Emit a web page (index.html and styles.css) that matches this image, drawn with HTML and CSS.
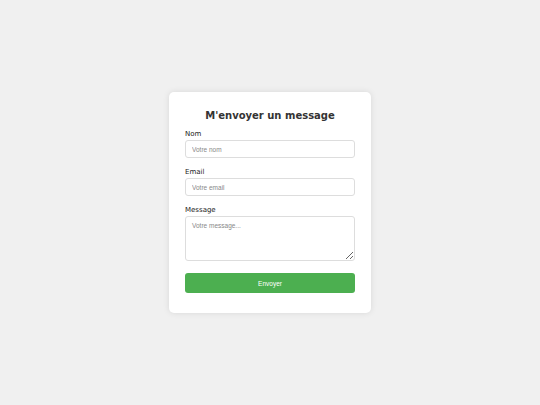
FILE: index.html
```html
<!DOCTYPE html>
<html lang="fr">
<head>
<meta charset="utf-8">
<link rel="stylesheet" href="styles.css">
</head>
<body>
<div class="card">
  <h2 class="title">M'envoyer un message</h2>
  <form class="form">
    <div class="group">
      <label class="label">Nom</label>
      <input class="field" type="text" placeholder="Votre nom">
    </div>
    <div class="group">
      <label class="label">Email</label>
      <input class="field" type="email" placeholder="Votre email">
    </div>
    <div class="group">
      <label class="label">Message</label>
      <textarea class="field area" placeholder="Votre message..."></textarea>
    </div>
    <button class="btn" type="button">Envoyer</button>
  </form>
</div>
</body>
</html>
```

FILE: styles.css
```css
* { box-sizing: border-box; }
html, body { margin: 0; padding: 0; }
body {
  background: #f0f0f0;
  font-family: "DejaVu Sans", sans-serif;
  min-height: 100vh;
  display: flex;
  align-items: center;
  justify-content: center;
}
.card {
  width: 202px;
  background: #fff;
  border-radius: 5px;
  box-shadow: 0 0 6px rgba(0,0,0,0.1);
  padding: 17px 16px 20px;
}
.title {
  margin: 0 0 7px;
  font-size: 10px;
  line-height: 14px;
  font-weight: bold;
  color: #333;
  text-align: center;
}
.form { display: flex; flex-direction: column; }
.group { display: flex; flex-direction: column; margin-bottom: 10px; }
.label {
  font-size: 7px;
  line-height: 9px;
  color: #222;
  margin-bottom: 1px;
}
.field {
  width: 100%;
  height: 18px;
  border: 1px solid #ddd;
  border-radius: 3px;
  padding: 0 6px;
  font-family: "Liberation Sans", Arial, sans-serif;
  font-size: 6.5px;
  color: #333;
  background: #fff;
  outline: none;
}
.field::placeholder { color: #888; }
.area {
  height: 45px;
  padding: 5px 6px;
  resize: vertical;
  display: block;
}
.btn {
  margin-top: 2px;
  height: 20px;
  width: 100%;
  border: none;
  border-radius: 3px;
  background: #4caf50;
  color: #fff;
  font-family: "Liberation Sans", Arial, sans-serif;
  font-size: 6.5px;
  cursor: pointer;
}
```
